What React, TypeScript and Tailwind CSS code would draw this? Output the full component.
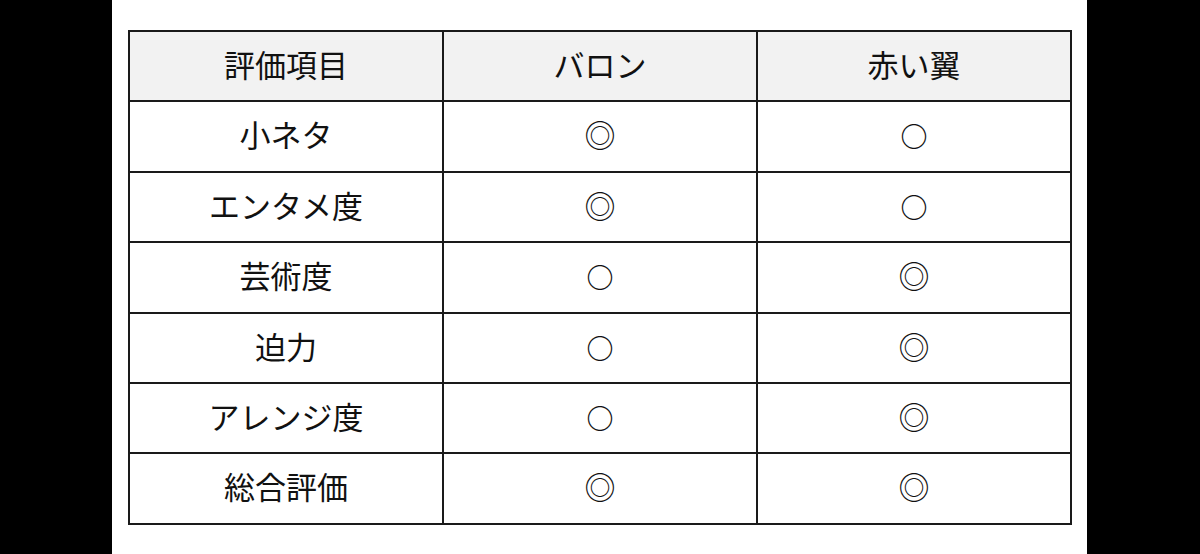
const rows: [string, string, string][] = [
  ['小ネタ', '◎', '○'],
  ['エンタメ度', '◎', '○'],
  ['芸術度', '○', '◎'],
  ['迫力', '○', '◎'],
  ['アレンジ度', '○', '◎'],
  ['総合評価', '◎', '◎'],
];

function Mark({ value }: { value: string }) {
  if (value === '○') {
    return <span className="text-[27px] font-bold leading-none">○</span>;
  }
  return <span className="text-[31px] leading-none">◎</span>;
}

export default function App() {
  return (
    <div className="w-[1200px] h-[554px] bg-black flex" style={{ fontFamily: '"Noto Sans CJK JP", "Noto Sans", sans-serif' }}>
      <div className="ml-[112px] w-[975px] h-full bg-white pt-[30px] pl-[16px]">
        <table className="w-[944px] table-fixed border-collapse border-2 border-[#1a1a1a] text-[31px] text-[#111]">
          <thead>
            <tr className="h-[70.4px] bg-[#f2f2f2]">
              <th className="border-2 border-[#1a1a1a] font-normal pb-1">評価項目</th>
              <th className="border-2 border-[#1a1a1a] font-normal pb-1">バロン</th>
              <th className="border-2 border-[#1a1a1a] font-normal pb-1">赤い翼</th>
            </tr>
          </thead>
          <tbody>
            {rows.map(([label, a, b]) => (
              <tr key={label} className="h-[70.4px]">
                <td className="border-2 border-[#1a1a1a] text-center pb-1">{label}</td>
                <td className="border-2 border-[#1a1a1a] text-center pb-1"><Mark value={a} /></td>
                <td className="border-2 border-[#1a1a1a] text-center pb-1"><Mark value={b} /></td>
              </tr>
            ))}
          </tbody>
        </table>
      </div>
    </div>
  );
}
